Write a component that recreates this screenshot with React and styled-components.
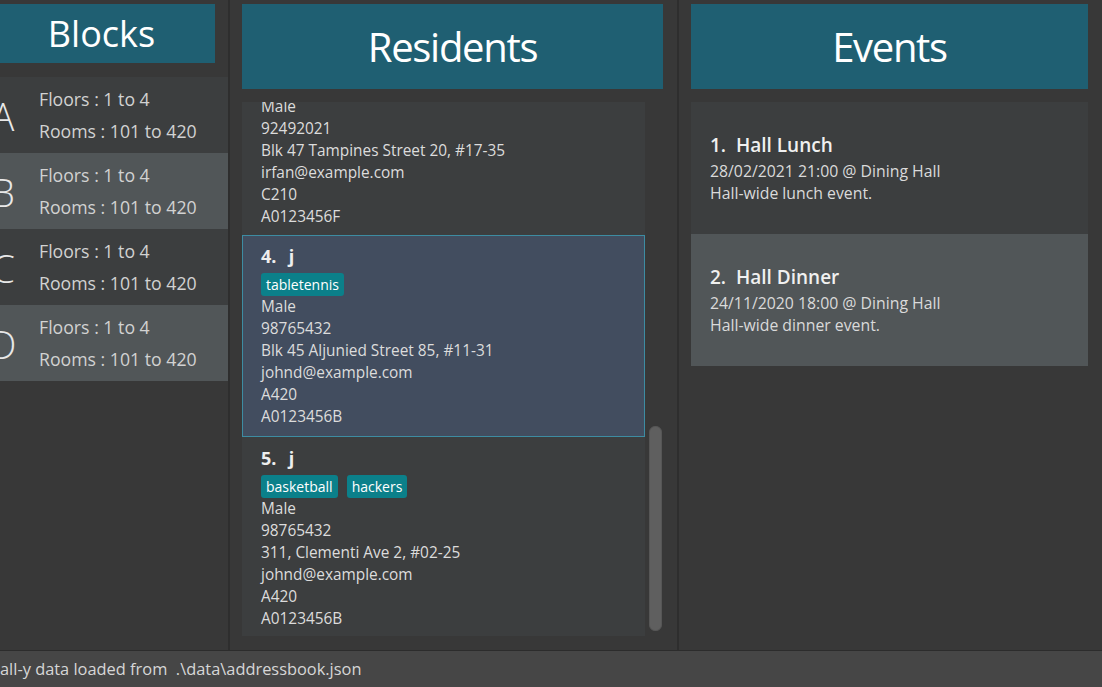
import React from "react";
import styled, { createGlobalStyle } from "styled-components";

const GlobalStyle = createGlobalStyle`
  html, body {
    margin: 0;
    padding: 0;
    background: #383838;
    overflow: hidden;
  }
  body {
    font-family: "Open Sans", "Noto Sans", sans-serif;
  }
  #root {
    height: 687px;
  }
`;

const Window = styled.div`
  width: 1102px;
  height: 687px;
  display: flex;
  flex-direction: column;
  background: #383838;
`;

const Main = styled.div`
  flex: 1;
  display: flex;
  min-height: 0;
`;

const Divider = styled.div`
  width: 2px;
  flex: none;
  background: #2e2e2e;
`;

const BlocksColumn = styled.div`
  width: 228px;
  flex: none;
  overflow: hidden;
  padding-top: 4px;
  box-sizing: border-box;
`;

const BlocksInner = styled.div`
  width: 252px;
  margin-left: -24px;
  display: flex;
  flex-direction: column;
`;

const Column = styled.div`
  width: ${(p) => p.$width}px;
  flex: none;
  box-sizing: border-box;
  padding: 4px 14px 14px 12px;
  display: flex;
  flex-direction: column;
  min-height: 0;
`;

const PanelHeader = styled.div`
  height: ${(p) => p.$height}px;
  margin-left: ${(p) => p.$inset || 0}px;
  width: ${(p) => (p.$width ? `${p.$width}px` : "auto")};
  flex: none;
  background: #1f5f72;
  color: #ffffff;
  display: flex;
  align-items: center;
  justify-content: center;
  font-size: ${(p) => p.$size}px;
  letter-spacing: ${(p) => p.$spacing || 0}px;
  font-weight: 400;
`;

const BlockList = styled.div`
  margin-top: 14px;
  display: flex;
  flex-direction: column;
`;

const BlockRow = styled.div`
  height: 76px;
  box-sizing: border-box;
  display: flex;
  align-items: center;
  padding-left: 12px;
  gap: 21px;
  background: ${(p) => (p.$alt ? "#515658" : "#3c3e3f")};
`;

const BlockLetter = styled.div`
  width: 30px;
  text-align: center;
  font-size: 38px;
  font-weight: 300;
  color: #e8e8e8;
  line-height: 1;
  margin-top: 2px;
`;

const BlockInfo = styled.div`
  display: flex;
  flex-direction: column;
`;

const InfoLine = styled.div`
  font-size: 17.7px;
  line-height: 32px;
  color: #d2d2d2;
`;

const ListRow = styled.div`
  margin-top: 13px;
  flex: 1;
  min-height: 0;
  display: flex;
`;

const ListViewport = styled.div`
  width: 403px;
  flex: none;
  overflow: hidden;
`;

const ScrolledList = styled.div`
  margin-top: -69px;
  display: flex;
  flex-direction: column;
`;

const ScrollTrack = styled.div`
  width: 18px;
  flex: none;
  box-sizing: border-box;
  padding: 0 1px 5px 4px;
  display: flex;
  flex-direction: column;
  justify-content: flex-end;
`;

const ScrollThumb = styled.div`
  height: 205px;
  border-radius: 6px;
  background: #5f5f5f;
  border: 1px solid #565656;
  box-sizing: border-box;
`;

const ResidentCard = styled.div`
  flex: none;
  padding: ${(p) => (p.$first ? "10px 18px 6px" : "8px 18px 8px")};
  border: 1px solid ${(p) => (p.$selected ? "#3d8ca2" : "transparent")};
  background: ${(p) => (p.$selected ? "#424d5f" : "#3c3e3f")};
  display: flex;
  flex-direction: column;
`;

const CardTitle = styled.div`
  font-size: 18px;
  font-weight: 700;
  line-height: 24px;
  color: #eeeeee;
  white-space: pre;
  word-spacing: 1.5px;
`;

const TagRow = styled.div`
  margin-top: 5px;
  display: flex;
  gap: 9px;
`;

const Tag = styled.span`
  height: 23px;
  line-height: 23px;
  padding: 0 5px;
  border-radius: 3px;
  background: #0b808a;
  color: #ffffff;
  font-size: 14px;
`;

const DetailLine = styled.div`
  font-size: 15.4px;
  line-height: 22px;
  color: #dcdcdc;
`;

const EventList = styled.div`
  margin-top: 13px;
  display: flex;
  flex-direction: column;
`;

const EventCard = styled.div`
  height: 132px;
  box-sizing: border-box;
  padding: 30px 19px 0;
  background: ${(p) => (p.$alt ? "#515658" : "#3c3e3f")};
`;

const EventTitle = styled.div`
  font-size: 19px;
  font-weight: 600;
  line-height: 26px;
  color: #f0f0f0;
  white-space: pre;
  margin-bottom: 2px;
`;

const EventLine = styled.div`
  font-size: 15.8px;
  line-height: 22px;
  color: #dadada;
`;

const StatusBar = styled.div`
  height: 37px;
  flex: none;
  box-sizing: border-box;
  border-top: 1px solid #2c2c2c;
  background: #464646;
  color: #d6d6d6;
  font-size: 16.4px;
  line-height: 36px;
  white-space: pre;
  overflow: hidden;
`;

const blocks = ["A", "B", "C", "D"];

const residents = [
  {
    id: 3,
    name: "Irfan Ibrahim",
    tags: ["classmates"],
    lines: ["Male", "92492021", "Blk 47 Tampines Street 20, #17-35", "irfan@example.com", "C210", "A0123456F"],
  },
  {
    id: 4,
    name: "j",
    tags: ["tabletennis"],
    selected: true,
    lines: ["Male", "98765432", "Blk 45 Aljunied Street 85, #11-31", "johnd@example.com", "A420", "A0123456B"],
  },
  {
    id: 5,
    name: "j",
    tags: ["basketball", "hackers"],
    lines: ["Male", "98765432", "311, Clementi Ave 2, #02-25", "johnd@example.com", "A420", "A0123456B"],
  },
];

const events = [
  { id: 1, title: "Hall Lunch", when: "28/02/2021 21:00 @ Dining Hall", desc: "Hall-wide lunch event." },
  { id: 2, title: "Hall Dinner", when: "24/11/2020 18:00 @ Dining Hall", desc: "Hall-wide dinner event." },
];

export default function App() {
  return (
    <Window>
      <GlobalStyle />
      <Main>
        <BlocksColumn>
          <BlocksInner>
            <PanelHeader $height={59} $size={36} $inset={12} $width={227}>
              Blocks
            </PanelHeader>
            <BlockList>
              {blocks.map((b, i) => (
                <BlockRow key={b} $alt={i % 2 === 1}>
                  <BlockLetter>{b}</BlockLetter>
                  <BlockInfo>
                    <InfoLine>Floors : 1 to 4</InfoLine>
                    <InfoLine>Rooms : 101 to 420</InfoLine>
                  </BlockInfo>
                </BlockRow>
              ))}
            </BlockList>
          </BlocksInner>
        </BlocksColumn>
        <Divider />
        <Column $width={447}>
          <PanelHeader $height={85} $size={40} $spacing={-1.3}>
            Residents
          </PanelHeader>
          <ListRow>
            <ListViewport>
              <ScrolledList>
                {residents.map((r, idx) => (
                  <ResidentCard key={r.id} $selected={r.selected} $first={idx === 0}>
                    <CardTitle>{`${r.id}.  ${r.name}`}</CardTitle>
                    <TagRow>
                      {r.tags.map((t) => (
                        <Tag key={t}>{t}</Tag>
                      ))}
                    </TagRow>
                    {r.lines.map((l, i) => (
                      <DetailLine key={i}>{l}</DetailLine>
                    ))}
                  </ResidentCard>
                ))}
              </ScrolledList>
            </ListViewport>
            <ScrollTrack>
              <ScrollThumb />
            </ScrollTrack>
          </ListRow>
        </Column>
        <Divider />
        <Column $width={423}>
          <PanelHeader $height={85} $size={40} $spacing={-1.3}>
            Events
          </PanelHeader>
          <EventList>
            {events.map((e, i) => (
              <EventCard key={e.id} $alt={i % 2 === 1}>
                <EventTitle>{`${e.id}.  ${e.title}`}</EventTitle>
                <EventLine>{e.when}</EventLine>
                <EventLine>{e.desc}</EventLine>
              </EventCard>
            ))}
          </EventList>
        </Column>
      </Main>
      <StatusBar>{"all-y data loaded from  .\\data\\addressbook.json"}</StatusBar>
    </Window>
  );
}
